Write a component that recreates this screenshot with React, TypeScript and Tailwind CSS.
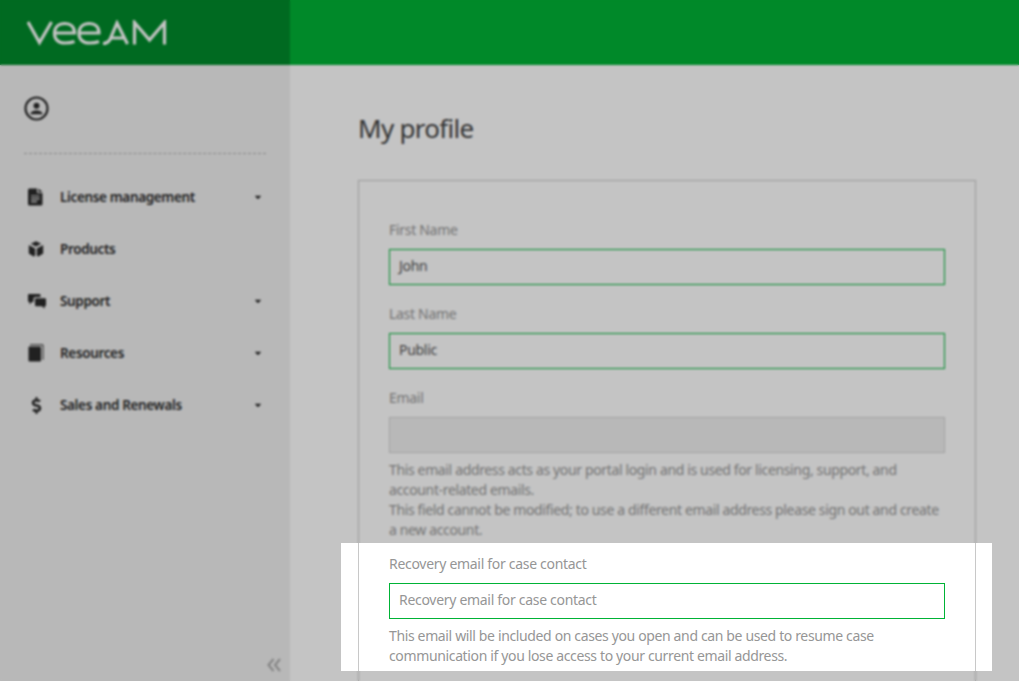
import React from "react";
import { FaCaretDown, FaDollarSign } from "react-icons/fa";

function ProfileIcon() {
  return (
    <svg width="25" height="25" viewBox="0 0 25 25" fill="none">
      <circle cx="12.5" cy="12.5" r="11" stroke="currentColor" strokeWidth="2.2" />
      <circle cx="12.5" cy="9.8" r="3" fill="currentColor" />
      <path d="M6.5 18.2c0-2.6 3-3.8 6-3.8s6 1.2 6 3.8z" fill="currentColor" />
    </svg>
  );
}

function FileIcon() {
  return (
    <svg width="15" height="18" viewBox="0 0 15 18" fill="currentColor">
      <path d="M1.5 0.5h7.5v4.5h5.5v11a1.5 1.5 0 0 1-1.5 1.5h-11.500a1.5 1.5 0 0 1-1.500-1.500v-14a1.500 1.500 0 0 1 1.500-1.500z" />
      <path d="M10.300 0.500l4.200 3.500h-4.200z" />
      <path d="M3 8h8.500M3 10.800h8.500M3 13.600h6" stroke="#f0f0f0" strokeWidth="1.200" />
    </svg>
  );
}

function CubeIcon() {
  return (
    <svg width="16" height="16" viewBox="0 0 16 16" fill="currentColor">
      <path d="M8 0.200l5.200 2.500-5.200 2.900-5.200-2.900z" />
      <path d="M0.800 4l6.400 3.500v7.300l-1.500 0.800-4.900-3z" />
      <path d="M15.200 4l-6.400 3.500v7.300l1.500 0.800 4.900-3z" />
    </svg>
  );
}

function ChatIcon() {
  return (
    <svg width="18" height="16" viewBox="0 0 18 16" fill="currentColor">
      <path d="M1 1h10.500a1 1 0 0 1 1 1v2h-5a2 2 0 0 0-2 2v3h-1.500l-2.500 2.500v-2.500h-0.500a1 1 0 0 1-1-1v-6a1 1 0 0 1 1-1z" />
      <path d="M8 5.300h9a1 1 0 0 1 1 1v6a1 1 0 0 1-1 1h-0.500v2.500l-2.500-2.500h-6a1 1 0 0 1-1-1v-6a1 1 0 0 1 1-1z" />
    </svg>
  );
}

function BookIcon() {
  return (
    <svg width="16" height="18" viewBox="0 0 16 18" fill="none">
      <path d="M2 0.800h13v15" stroke="currentColor" strokeWidth="1" />
      <rect x="0.500" y="2.500" width="12.500" height="15" rx="1" fill="currentColor" />
    </svg>
  );
}

function CollapseIcon() {
  return (
    <svg width="14" height="14" viewBox="0 0 14 14" fill="none" stroke="currentColor" strokeWidth="2">
      <path d="M6.500 1L1.500 7L6.500 13" />
      <path d="M13 1L8 7L13 13" />
    </svg>
  );
}

const nav: { label: string; icon: React.ReactNode; caret: boolean }[] = [
  { label: "License management", icon: <FileIcon />, caret: true },
  { label: "Products", icon: <CubeIcon />, caret: false },
  { label: "Support", icon: <ChatIcon />, caret: true },
  { label: "Resources", icon: <BookIcon />, caret: true },
  { label: "Sales and Renewals", icon: <FaDollarSign size={17} />, caret: true },
];

function Field({ label, value, placeholder }: { label: string; value?: string; placeholder?: string }) {
  return (
    <div>
      <div className="h-5 mb-[9px] text-sm leading-5 tracking-[-0.3px] text-[#969696]">{label}</div>
      <div className="h-9 border border-[#00b336] flex items-center px-[9px] pb-[2px] text-sm tracking-[-0.3px]">
        {value ? <span className="text-[#555555]">{value}</span> : <span className="text-[#969696]">{placeholder}</span>}
      </div>
    </div>
  );
}

export default function App() {
  return (
    <div className="relative h-[681px] w-[1019px] overflow-hidden bg-white font-['Noto_Sans','Open_Sans',sans-serif]">
      <header className="flex h-[65px] bg-[#00b336]">
        <div className="flex w-[290px] items-center bg-[#008b2b] pl-[27px]">
          <svg width="140" height="26" viewBox="0 0 140 26" fill="none" stroke="#ffffff" strokeWidth="3.200" strokeLinejoin="miter">
            <path d="M1 2 L12.500 22.500 L24.500 2" />
            <path d="M28 13 H47.500 C47.500 6.500 43.500 3.500 38 3.500 C31.500 3.500 27.500 7.500 27.500 13.500 C27.500 19.500 31.500 23 38 23 C42 23 45 22.500 47.500 21.500" />
            <path d="M52.500 13 H72 C72 6.500 68 3.500 62.500 3.500 C56 3.500 52 7.500 52 13.500 C52 19.500 56 23 62.500 23 C66.500 23 69.500 22.500 72 21.500" />
            <path d="M76 23.500 C79 23.500 81 22.500 83 19.500 L90 3 L100.500 24 M83 18 H97" />
            <path d="M107.500 24.500 V2.500 L122.500 20 L137.500 2.500 V24.500" />
          </svg>
        </div>
      </header>
      <div className="flex h-[616px]">
        <aside className="w-[290px] shrink-0 bg-[#f0f0f0] text-[#2b2b2b] flex flex-col">
          <div className="px-[24px] pt-[31px]">
            <ProfileIcon />
            <div className="mt-[32px] border-t border-dashed border-[#b0b0b0]" />
          </div>
          <nav className="mt-[17px] flex flex-col">
            {nav.map((n) => (
              <div key={n.label} className="flex h-[52px] items-center pl-[28px] pr-[28px]">
                <span className="flex w-[32px] shrink-0">{n.icon}</span>
                <span className="flex-1 text-[13.500px] font-semibold tracking-[-0.35px]">{n.label}</span>
                {n.caret && <FaCaretDown size={10} className="-mr-[1px]" />}
              </div>
            ))}
          </nav>
          <div className="mt-auto flex justify-end pr-[9px] pb-[9px] text-[#aaaaaa]">
            <CollapseIcon />
          </div>
        </aside>
        <main className="flex-1 pl-[68px] pr-[43px]">
          <h1 className="mt-[45px] h-[36px] text-[26px] leading-[36px] tracking-[-0.7px] text-[#444444]">My profile</h1>
          <section className="mt-[34px] border border-[#c8c8c8] px-[30px] pt-[39px] flex flex-col">
            <Field label="First Name" value="John" />
            <div className="h-[19px]" />
            <Field label="Last Name" value="Public" />
            <div className="h-[19px]" />
            <div>
              <div className="h-5 mb-[9px] text-sm leading-5 tracking-[-0.3px] text-[#969696]">Email</div>
              <div className="h-9 border border-[#d4d4d4] bg-[#f0f0f0]" />
            </div>
            <p className="mt-[7px] text-sm leading-5 tracking-[-0.36px] text-[#969696]">
              This email address acts as your portal login and is used for licensing, support, and
              <br />
              account-related emails.
              <br />
              This field cannot be modified; to use a different email address please sign out and create
              <br />
              a new account.
            </p>
            <div className="h-[14px]" />
            <Field label="Recovery email for case contact" placeholder="Recovery email for case contact" />
            <p className="mt-[7px] text-sm leading-5 tracking-[-0.36px] text-[#969696]">
              This email will be included on cases you open and can be used to resume case
              <br />
              communication if you lose access to your current email address.
            </p>
            <div className="h-[40px]" />
          </section>
        </main>
      </div>
      <div className="absolute inset-0 bg-black/[0.23] backdrop-blur-[1px] [clip-path:polygon(evenodd,0_0,100%_0,100%_100%,0_100%,0_0,341px_543px,341px_671px,992px_671px,992px_543px,341px_543px,0_0)]" />
    </div>
  );
}
